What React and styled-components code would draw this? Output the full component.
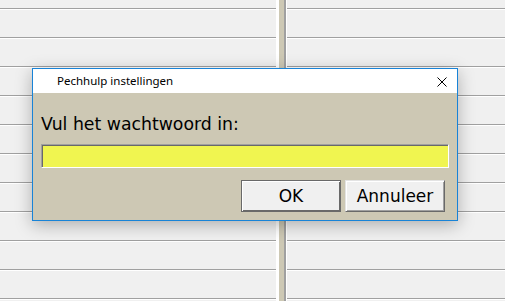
import styled, { createGlobalStyle } from "styled-components";

const GlobalStyle = createGlobalStyle`
  html, body {
    margin: 0;
    padding: 0;
    width: 505px;
    height: 301px;
    overflow: hidden;
    background: #f0f0f0;
  }
`;

const Screen = styled.div`
  position: relative;
  display: flex;
  width: 505px;
  height: 301px;
`;

const Pane = styled.div`
  flex: ${(p) => (p.$width ? `0 0 ${p.$width}px` : "1 1 auto")};
  height: 100%;
  background: repeating-linear-gradient(
    to bottom,
    #f0f0f0 0 8px,
    #a0a0a0 8px 9px,
    #ffffff 9px 10px,
    #f0f0f0 10px 29px
  );
`;

const Splitter = styled.div`
  flex: 0 0 11px;
  height: 100%;
  box-sizing: border-box;
  background: #cdc8b4;
  border-left: 3px solid #fff;
  border-right: 1px solid #fff;
  box-shadow: inset -2px 0 0 #a0a0a0;
`;

const Dialog = styled.div`
  position: absolute;
  left: 32px;
  top: 68px;
  width: 426px;
  height: 153px;
  box-sizing: border-box;
  border: 1px solid #1883d7;
  background: #cdc8b4;
  box-shadow: 0 4px 16px rgba(0, 0, 0, 0.28);
  display: flex;
  flex-direction: column;
`;

const TitleBar = styled.div`
  flex: 0 0 24px;
  display: flex;
  align-items: center;
  background: #fff;
  padding: 0 10px 0 24px;
`;

const Title = styled.span`
  flex: 1;
  font-family: "Noto Sans", "Liberation Sans", sans-serif;
  font-size: 11.5px;
  line-height: 24px;
  color: #000;
`;

const CloseButton = styled.span`
  display: flex;
  width: 10px;
  height: 10px;
  margin-top: 1px;
`;

const Body = styled.div`
  flex: 1;
  display: flex;
  flex-direction: column;
  padding: 21px 8px 8px 8px;
  font-family: "DejaVu Sans", Verdana, sans-serif;
  font-size: 17px;
  color: #000;
`;

const Label = styled.div`
  font-size: 17.3px;
  line-height: 20px;
  height: 20px;
`;

const PasswordField = styled.input`
  margin-top: 10px;
  height: 24px;
  width: 100%;
  box-sizing: border-box;
  background: #f0f550;
  border-style: solid;
  border-width: 1px;
  border-color: #a0a0a0 #fff #fff #a0a0a0;
  box-shadow: inset 1px 1px 0 #696969;
  outline: none;
  padding: 0 4px;
  font: inherit;
`;

const ButtonRow = styled.div`
  margin-top: 12px;
  display: flex;
  justify-content: flex-end;
  gap: 4px;
  padding-right: 4px;
`;

const Button = styled.button`
  width: 100px;
  height: 32px;
  box-sizing: border-box;
  background: #f0f0f0;
  font-family: "DejaVu Sans", Verdana, sans-serif;
  font-size: 17px;
  color: #000;
  padding: 0;
  border-style: solid;
  border-width: 1px;
  border-color: ${(p) =>
    p.$default ? "#696969" : "#e3e3e3 #696969 #696969 #e3e3e3"};
  box-shadow: ${(p) =>
    p.$default
      ? "inset 1px 1px 0 #fff, inset -1px -1px 0 #696969"
      : "inset 1px 1px 0 #fff, inset -1px -1px 0 #a0a0a0"};
  display: flex;
  align-items: center;
  justify-content: center;
`;

export default function App() {
  return (
    <>
      <GlobalStyle />
      <Screen>
        <Pane $width={276} />
        <Splitter />
        <Pane />
        <Dialog>
          <TitleBar>
            <Title>Pechhulp instellingen</Title>
            <CloseButton>
              <svg width="10" height="10" viewBox="0 0 10 10">
                <path d="M0.5 0.5 L9.5 9.5 M9.5 0.5 L0.5 9.5" stroke="#000" strokeWidth="1" />
              </svg>
            </CloseButton>
          </TitleBar>
          <Body>
            <Label>Vul het wachtwoord in:</Label>
            <PasswordField type="password" />
            <ButtonRow>
              <Button $default>OK</Button>
              <Button>Annuleer</Button>
            </ButtonRow>
          </Body>
        </Dialog>
      </Screen>
    </>
  );
}
